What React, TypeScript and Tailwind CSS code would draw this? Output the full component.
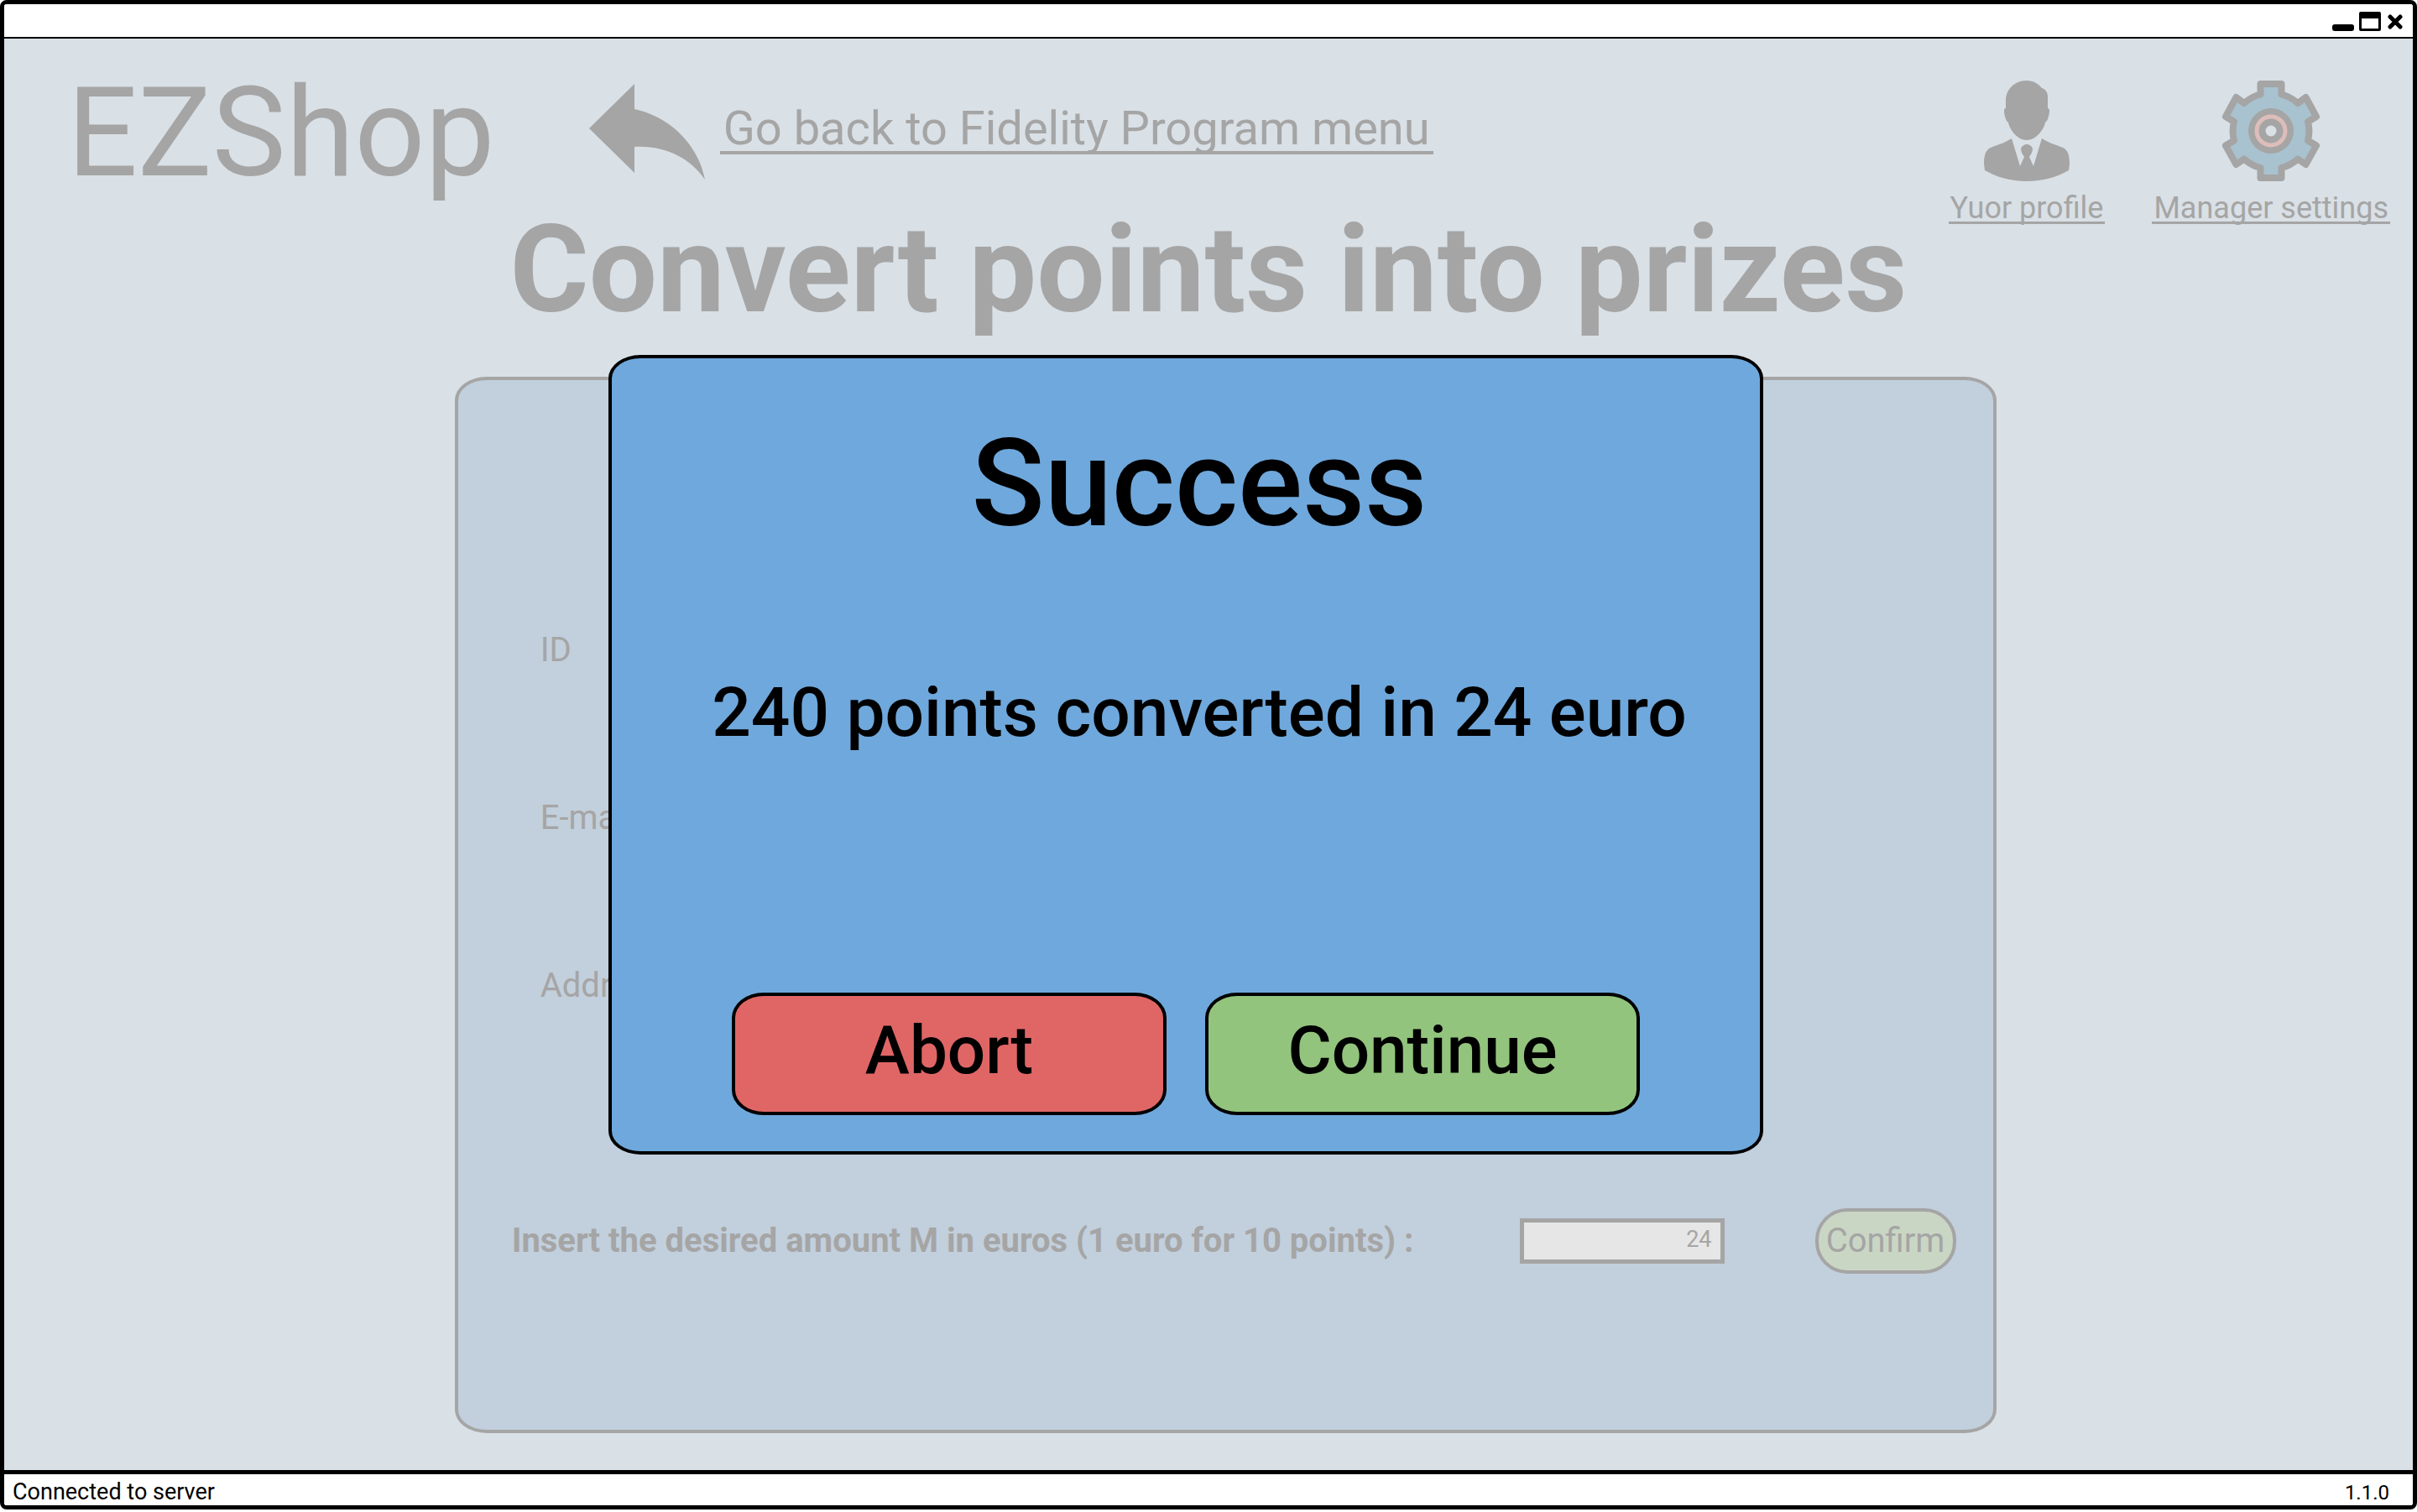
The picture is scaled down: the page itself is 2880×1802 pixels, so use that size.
import type { ReactNode } from 'react'

const fields = ['ID', 'E-mail', 'Address']

function BackArrow() {
  return (
    <svg viewBox="0 0 138 114" className="h-[114px] w-[138px] fill-current" aria-hidden="true">
      <path d="M0 53 54 0v30c44 9 77 45 84 84C120 88 90 73 54 75v31z" />
    </svg>
  )
}

function ProfileIcon() {
  return (
    <svg viewBox="0 0 102 120" className="h-[120px] w-[102px] fill-current" aria-hidden="true">
      <path d="M51 0C36 0 26 11 26 24v9c-2 0-2 2-2 5 1 5 2 10 5 12 2 10 12 21 22 21s20-11 22-21c3-2 4-7 5-12 0-3 0-5-2-5V19c0-5-3-9-7-10C65 4 59 0 51 0Z" />
      <path d="M33 69c-9 6-19 8-27 12-5 4-6 11-6 18l1 8c14 8 31 13 50 13s36-5 50-13l1-8c0-7-1-14-6-18-8-4-18-6-27-12L59 102 54 91c2-3 4-6 4-10-1-3-4-5-7-5s-6 2-7 5c0 4 2 7 4 10l-5 11Z" />
    </svg>
  )
}

function GearIcon() {
  return (
    <svg viewBox="0 0 118 120" className="h-[120px] w-[118px]" fill="none" aria-hidden="true">
      <path
        d="M46.500 4h25v12.500A46 46 0 0 1 91 27l9.500-7L113 43l-10 6a46 46 0 0 1 0 22.500l10 6L100.500 100 91 93.500A46 46 0 0 1 71.500 104v12h-25v-12A46 46 0 0 1 27 93.500l-9.500 6.500L5 77.500l10-6A46 46 0 0 1 15 49L5 43l12.500-23 9.500 7a46 46 0 0 1 19.500-10.500Z"
        fill="#a8c2cf"
        stroke="currentColor"
        strokeWidth="8"
        strokeLinejoin="round"
      />
      <circle cx="59" cy="60" r="27" fill="currentColor" />
      <circle cx="59" cy="60" r="17" stroke="#ddbdba" strokeWidth="5" />
      <circle cx="59" cy="60" r="6.500" fill="#d9e0e6" />
    </svg>
  )
}

function IconLink({ label, children }: { label: string; children: ReactNode }) {
  return (
    <a href="#" className="flex flex-col items-center gap-4">
      {children}
      <span className="border-b-3 border-current px-0.5 text-[36px] leading-8">{label}</span>
    </a>
  )
}

function TitleBar() {
  return (
    <div className="flex h-[41px] items-center justify-end gap-1.5 border-b-2 border-black bg-white pr-3">
      <button type="button" aria-label="Minimize">
        <svg viewBox="0 0 26 24" className="h-6 w-[26px]">
          <rect y="16" width="26" height="8" rx="3" />
        </svg>
      </button>
      <button type="button" aria-label="Maximize">
        <svg viewBox="0 0 26 24" className="h-6 w-[26px]">
          <path fillRule="evenodd" d="M2 1h22a2 2 0 0 1 2 2v19a2 2 0 0 1-2 2H2a2 2 0 0 1-2-2V3a2 2 0 0 1 2-2Zm1 8v12h20V9Z" />
        </svg>
      </button>
      <button type="button" aria-label="Close" className="pl-0.5">
        <svg viewBox="0 0 18 24" className="h-6 w-[18px]">
          <path d="m3 7 12 12M15 7 3 19" stroke="#000" strokeWidth="5" strokeLinecap="round" />
        </svg>
      </button>
    </div>
  )
}

function SuccessDialog() {
  return (
    <div className="absolute inset-x-0 top-[377px] flex justify-center pr-[54px]">
      <section
        role="dialog"
        aria-labelledby="dialog-title"
        className="flex h-[953px] w-[1376px] flex-col items-center border-4 border-black bg-[#6fa8dc] pt-[70px] pb-[43px] text-black [border-radius:38px/28px]"
      >
        <h2 id="dialog-title" className="pl-8 text-[144px] leading-[160px] font-medium">Success</h2>
        <p className="mt-36 pl-8 text-[82px] leading-24 font-medium">240 points converted in 24 euro</p>
        <div className="mt-auto flex gap-[46px]">
          <button
            type="button"
            className="h-[146px] w-[518px] border-4 border-black bg-[#e06666] pb-2 text-[80px] leading-24 font-medium [border-radius:38px/30px]"
          >
            Abort
          </button>
          <button
            type="button"
            className="h-[146px] w-[518px] border-4 border-black bg-[#93c47d] pb-2 text-[80px] leading-24 font-medium [border-radius:38px/30px]"
          >
            Continue
          </button>
        </div>
      </section>
    </div>
  )
}

export default function App() {
  return (
    <div className="flex min-h-screen flex-col bg-white pb-[3px] font-['Roboto',sans-serif] text-black">
      <div className="flex flex-1 flex-col overflow-hidden rounded-lg border-[5px] border-black">
        <TitleBar />

        <main className="relative flex flex-1 flex-col bg-[#d9e0e6] text-[#a5a5a5]">
          <header className="flex h-[196px] items-start justify-between pt-[50px] pr-[27px] pl-[75px]">
            <div className="flex h-[122px] items-center">
              <p className="pt-1 text-[148px] leading-[120px]">EZShop</p>
              <a href="#" className="ml-28 flex items-center gap-[18px]">
                <BackArrow />
                <span className="mb-1 border-b-4 border-current px-1 text-[56px] leading-[54px]">
                  Go back to Fidelity Program menu
                </span>
              </a>
            </div>
            <nav className="flex gap-14">
              <IconLink label="Yuor profile">
                <ProfileIcon />
              </IconLink>
              <IconLink label="Manager settings">
                <GearIcon />
              </IconLink>
            </nav>
          </header>

          <h1 className="text-center text-[144px] leading-[160px] font-bold">Convert points into prizes</h1>

          <section className="mt-[47px] mr-[17.3%] mb-11 ml-[18.7%] flex flex-1 flex-col border-4 border-current bg-[#c2cfdc] pt-[222px] pr-11 pl-16 [border-radius:38px/28px]">
            <ul className="pl-[34px] text-[40px]">
              {fields.map((field) => (
                <li key={field} className="flex h-[200px] items-center">
                  {field}
                </li>
              ))}
            </ul>
            <form className="mt-[164px] flex h-20 items-center" onSubmit={(e) => e.preventDefault()}>
              <label htmlFor="amount" className="mr-auto text-[40px] font-bold">
                Insert the desired amount M in euros (1 euro for 10 points) :
              </label>
              <input
                id="amount"
                type="text"
                defaultValue="24"
                className="h-[54px] w-[244px] border-[5px] border-current bg-[#e6e6e6] pr-2.5 pb-1 text-right text-[27px]"
              />
              <button
                type="submit"
                className="ml-[108px] h-[78px] w-[168px] rounded-[38px] border-4 border-current bg-[#cad6c4] text-[40px]"
              >
                Confirm
              </button>
            </form>
          </section>

          <SuccessDialog />
        </main>

        <footer className="flex h-[42px] items-center justify-between border-t-[5px] border-black bg-white pt-1.5 pr-7 pl-2.5">
          <span className="text-[27px]">Connected to server</span>
          <span className="text-2xl">1.1.0</span>
        </footer>
      </div>
    </div>
  )
}
